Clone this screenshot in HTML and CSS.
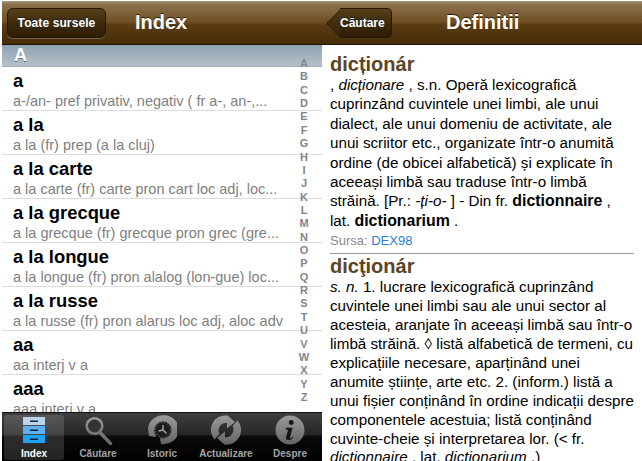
FILE: index.html
```html
<!DOCTYPE html>
<html lang="ro">
<head>
<meta charset="utf-8">
<title>Dicționar</title>
<link rel="stylesheet" href="styles.css">
</head>
<body>
<div class="screens">
  <section class="pane pane-left">
    <header class="nav">
      <button class="btn">Toate sursele</button>
      <h1 class="nav-title title-index">Index</h1>
    </header>
    <div class="list-area">
      <div class="section-head">A</div>
      <ul class="rows">
        <li class="row"><b>a</b><span>a-/an- pref privativ, negativ ( fr a-, an-,...</span></li>
        <li class="row"><b>a la</b><span>a la (fr) prep (a la cluj)</span></li>
        <li class="row"><b>a la carte</b><span>a la carte (fr) carte pron cart loc adj, loc...</span></li>
        <li class="row"><b>a la grecque</b><span>a la grecque (fr) grecque pron grec (gre...</span></li>
        <li class="row"><b>a la longue</b><span>a la longue (fr) pron alalog (lon-gue) loc...</span></li>
        <li class="row"><b>a la russe</b><span>a la russe (fr) pron alarus loc adj, aloc adv</span></li>
        <li class="row"><b>aa</b><span>aa interj v a</span></li>
        <li class="row"><b>aaa</b><span>aaa interj v a</span></li>
      </ul>
      <ol class="alpha">
        <li>A</li><li>B</li><li>C</li><li>D</li><li>E</li><li>F</li><li>G</li><li>H</li><li>I</li><li>J</li><li>K</li><li>L</li><li>M</li><li>N</li><li>O</li><li>P</li><li>Q</li><li>R</li><li>S</li><li>T</li><li>U</li><li>V</li><li>W</li><li>X</li><li>Y</li><li>Z</li>
      </ol>
    </div>
    <nav class="tabbar">
      <div class="tab active">
        <svg class="ico" viewBox="0 0 30 30">
          <defs>
            <linearGradient id="gray" gradientUnits="userSpaceOnUse" x1="0" y1="0" x2="0" y2="30"><stop offset="0" stop-color="#9c9c9c"/><stop offset="1" stop-color="#626262"/></linearGradient>
          </defs>
          <rect x="4" y="2" width="22" height="8" fill="#b9d3e8"/>
          <rect x="4" y="11" width="22" height="8" fill="#5cb0ee"/>
          <rect x="4" y="20" width="22" height="8" fill="#1ea3f6"/>
          <rect x="11" y="5.500" width="8" height="1.500" fill="#1c2c3a"/>
          <rect x="11" y="14.500" width="8" height="1.500" fill="#10263a"/>
          <rect x="11" y="23.500" width="8" height="1.500" fill="#0c2438"/>
        </svg>
        <span>Index</span>
      </div>
      <div class="tab">
        <svg class="ico" viewBox="0 0 30 30">
          <circle cx="11.500" cy="11" r="7.800" fill="#333" stroke="url(#gray)" stroke-width="2.600"/>
          <path d="M17 17.500L27.500 28.500" stroke="url(#gray)" stroke-width="3.400" stroke-linecap="round" fill="none"/>
        </svg>
        <span>Căutare</span>
      </div>
      <div class="tab">
        <svg class="ico" viewBox="0 0 30 30">
          <path d="M0 13.500A15.500 14.500 0 1 1 13 29L12 22.500A9 9 0 0 0 6 15L8 22L1 21Z" fill="url(#gray)" transform="translate(1 0)"/>
          <circle cx="16" cy="15" r="8.500" fill="#1c1c1c"/>
          <circle cx="16" cy="15" r="7.500" fill="none" stroke="#808080" stroke-width="1" stroke-dasharray="1 2"/>
          <path d="M16 10v5l3.500 3.500M16 15l-4.500 1" stroke="#a0a0a0" stroke-width="1.500" fill="none"/>
        </svg>
        <span>Istoric</span>
      </div>
      <div class="tab">
        <svg class="ico" viewBox="0 0 30 30">
          <g fill="url(#gray)">
            <path d="M3.500 24.500A14.500 14.500 0 0 1 16 .5V0L24 7L16 13.500V8A7.500 7.500 0 0 0 8.500 19Z"/>
            <path d="M26.500 5.500A14.500 14.500 0 0 1 14 29.500V30L6 23L14 16.500V22A7.500 7.500 0 0 0 21.500 11Z"/>
          </g>
        </svg>
        <span>Actualizare</span>
      </div>
      <div class="tab">
        <svg class="ico" viewBox="0 0 30 30">
          <circle cx="15" cy="15" r="14.500" fill="url(#gray)"/>
          <g transform="scale(.88)" fill="#161616">
            <circle cx="18.500" cy="8.500" r="2.800"/>
            <path d="M12.500 14.500h7.500l-3 11c-.2.9.6 1.100 1.200.6l2-1.600.6.8c-1.800 2.200-3.600 3.200-5.800 3.200-2 0-3-1.200-2.500-3.200l2.300-8.300-2.500-.5Z"/>
          </g>
        </svg>
        <span>Despre</span>
      </div>
    </nav>
  </section>
  <section class="pane pane-right">
    <header class="nav">
      <button class="back">Căutare</button>
      <h1 class="nav-title title-def">Definitii</h1>
    </header>
    <article class="def">
      <h2>dicționár</h2>
      <p class="entry-first">, <i>dicționare</i> , s.n. Operă lexicografică cuprinzând cuvintele unei limbi, ale unui dialect, ale unui domeniu de activitate, ale unui scriitor etc., organizate într-o anumită ordine (de obicei alfabetică) și explicate în aceeași limbă sau traduse într-o limbă străină. [Pr.: <i>-ți-o-</i> ] - Din fr. <b>dictionnaire</b> , lat. <b>dictionarium</b> .</p>
      <div class="source">Sursa: <a>DEX98</a></div>
      <hr>
      <h2>dicţionár</h2>
      <p class="entry-second"><i>s. n.</i> 1. lucrare lexicografică cuprinzând cuvintele unei limbi sau ale unui sector al acesteia, aranjate în aceeași limbă sau într-o limbă străină. ◊ listă alfabetică de termeni, cu explicațiile necesare, aparținând unei anumite științe, arte etc. 2. (inform.) listă a unui fișier conținând în ordine indicații despre componentele acestuia; listă conținând cuvinte-cheie și interpretarea lor. (&lt; fr. <i>dictionnaire</i> , lat. <i>dictionarium</i> .)</p>
    </article>
  </section>
</div>
</body>
</html>
```
FILE: styles.css
```css
* { box-sizing: border-box; margin: 0; padding: 0; }
html, body { width: 642px; height: 461px; overflow: hidden; background: #fff; }
body { font-family: "Liberation Sans", Arial, sans-serif; }
.screens { display: flex; height: 461px; padding-top: 1px; padding-left: 2px; }
.pane { display: flex; flex-direction: column; height: 460px; overflow: hidden; }
.pane-left { width: 320px; }
.pane-right { width: 320px; }
.nav {
  flex: none; height: 44px; display: flex; align-items: center; position: relative; z-index: 0;
  background: linear-gradient(#a79a80 0, #8b7350 3px, #6d4c1f 22px, #5a3d13 23px, #452c08 43px);
  border-bottom: 1px solid #1f1504;
}
.nav-title { color: #fff; font-size: 20px; font-weight: bold; text-shadow: 0 -1px 0 #2a1a04; }
.title-index { margin-left: 29px; }
.title-def { margin-left: 54px; }
.btn, .back {
  font: bold 12px "Liberation Sans", Arial, sans-serif; color: #fff; height: 30px;
  background: linear-gradient(#584019, #3d2a0d 50%, #2e1e06);
  border: 1px solid #251803; text-shadow: 0 -1px 0 #222;
  box-shadow: 0 1px 0 rgba(255,255,255,.25);
}
.btn { width: 99px; margin-left: 5px; border-radius: 6px; letter-spacing: .1px; }
.back {
  width: 52px; margin-left: 18px; border-left: 0; border-radius: 0 5px 5px 0; position: relative; padding-right: 8px; box-shadow: none;
}
.back::before {
  content: ""; position: absolute; left: -10px; top: 4px; width: 20px; height: 20px; transform: rotate(45deg);
  background: linear-gradient(135deg, #4f3915, #33230a); border-left: 1px solid #251803; border-bottom: 1px solid #251803; border-radius: 0 0 0 3px; z-index: -1;
}

.list-area { flex: 1; min-height: 0; position: relative; overflow: hidden; background: #fff; }
.section-head {
  height: 22px; padding-left: 12px; color: #fff; font-size: 18px; font-weight: bold; line-height: 20px;
  background: linear-gradient(#8fa1b0, #b4c1cc); border-bottom: 1px solid #a5aeb6; text-shadow: 0 1px 0 #66737d;
}
.rows { list-style: none; }
.row { height: 44px; border-bottom: 1px solid #dcdcdc; padding: 1px 0 0 11px; display: flex; flex-direction: column; }
.row b { font-size: 18.4px; line-height: 25px; color: #000; }
.row span { font-size: 14.5px; line-height: 16px; color: #808080; white-space: nowrap; overflow: hidden; width: 280px; }
.alpha {
  list-style: none; position: absolute; left: 292px; top: 12px; width: 20px; text-align: center;
  font-size: 11px; font-weight: bold; color: #80868c; line-height: 13.36px;
}

.tabbar {
  flex: none; height: 49px; display: flex; padding-top: 2px;
  background: linear-gradient(#3e3e3e 0, #262626 22px, #0a0a0a 23px, #000);
  border-top: 1px solid #111;
}
.tab { width: 64px; display: flex; flex-direction: column; align-items: center; color: #a4a4a4; font-size: 10px; font-weight: bold; border-radius: 3px; margin: 0 0 1px 0; }
.tab .ico { width: 30px; height: 30px; flex: none; }
.tab span { line-height: 10px; margin-top: 4px; white-space: nowrap; }
.tab.active { background: rgba(255,255,255,.14); color: #fff; margin-left: 2px; width: 60px; margin-right: 2px; }

.def { flex: 1; min-height: 0; overflow: hidden; padding: 8px 7px 0 8px; color: #000; font-size: 15.2px; }
.entry-first { line-height: 19.4px; }
.entry-first b { font-size: 15.9px; }
.entry-second { line-height: 18.9px; margin-top: 1px; }
.def h2 { font-size: 20px; line-height: 22px; color: #5b4525; font-weight: bold; }
.source { color: #8a8a8a; font-size: 13px; line-height: 16px; margin-top: 3px; }
.source a { color: #2a7fe0; }
.def hr { border: 0; border-top: 1px solid #999; margin: 4px 1px 1px 0; }
```
